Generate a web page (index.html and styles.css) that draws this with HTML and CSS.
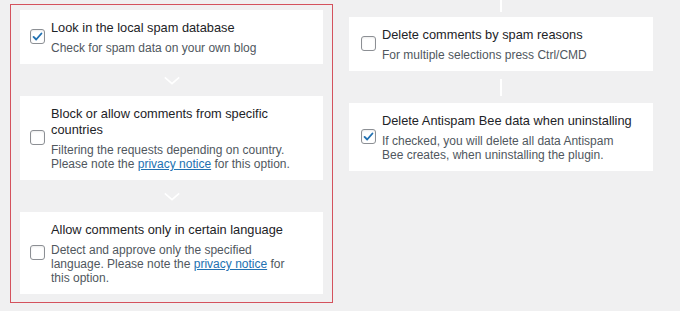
FILE: index.html
```html
<!DOCTYPE html>
<html>
<head>
<meta charset="utf-8">
<link rel="stylesheet" href="styles.css">
</head>
<body>
<div class="page">
  <div class="col-left">
    <div class="card">
      <span class="cb checked"><svg viewBox="0 0 16 16"><path d="M3.8 8.4 L6.6 11.2 L12.2 4.8" /></svg></span>
      <div class="text">
        <div class="title">Look in the local spam database</div>
        <div class="desc">Check for spam data on your own blog</div>
      </div>
    </div>
    <div class="chev"><svg viewBox="0 0 20 10"><path d="M2 1.5 L10 8.5 L18 1.5"/></svg></div>
    <div class="card">
      <span class="cb"></span>
      <div class="text">
        <div class="title">Block or allow comments from specific countries</div>
        <div class="desc">Filtering the requests depending on country. Please note the <a href="#">privacy notice</a> for this option.</div>
      </div>
    </div>
    <div class="chev"><svg viewBox="0 0 20 10"><path d="M2 1.5 L10 8.5 L18 1.5"/></svg></div>
    <div class="card">
      <span class="cb"></span>
      <div class="text">
        <div class="title">Allow comments only in certain language</div>
        <div class="desc">Detect and approve only the specified language. Please note the <a href="#">privacy notice</a> for this option.</div>
      </div>
    </div>
  </div>
  <div class="col-right">
    <div class="line top"></div>
    <div class="card">
      <span class="cb"></span>
      <div class="text">
        <div class="title">Delete comments by spam reasons</div>
        <div class="desc">For multiple selections press Ctrl/CMD</div>
      </div>
    </div>
    <div class="line mid"></div>
    <div class="card">
      <span class="cb checked"><svg viewBox="0 0 16 16"><path d="M3.8 8.4 L6.6 11.2 L12.2 4.8" /></svg></span>
      <div class="text">
        <div class="title">Delete Antispam Bee data when uninstalling</div>
        <div class="desc">If checked, you will delete all data Antispam Bee creates, when uninstalling the plugin.</div>
      </div>
    </div>
  </div>
</div>
</body>
</html>
```
FILE: styles.css
```css
html, body {
  margin: 0;
  padding: 0;
  background: #f0f0f1;
}
body {
  font-family: "Liberation Sans", Arial, sans-serif;
  width: 680px;
  height: 311px;
  overflow: hidden;
}
.page {
  display: flex;
  align-items: flex-start;
  padding: 4px 0 0 10px;
}
.col-left {
  width: 303px;
  border: 1px solid #d4525d;
  padding: 5px 9px 8px 9px;
  display: flex;
  flex-direction: column;
}
.col-right {
  width: 304px;
  margin-left: 16px;
  margin-top: -4px;
  display: flex;
  flex-direction: column;
}
.card {
  background: #fff;
  display: flex;
  align-items: center;
  padding: 10px 18px 9px 10px;
}
.col-right .card {
  padding-left: 12px;
}
.cb {
  flex: none;
  width: 13px;
  height: 13px;
  border: 1px solid #8c8f94;
  border-radius: 3px;
  background: #fff;
  margin-right: 6px;
  margin-top: -2px;
  position: relative;
  box-shadow: inset 0 1px 2px rgba(0,0,0,0.08);
}
.cb svg {
  position: absolute;
  left: -1px;
  top: -1px;
  width: 15px;
  height: 15px;
}
.cb svg path {
  fill: none;
  stroke: #2271b1;
  stroke-width: 2;
  stroke-linecap: round;
  stroke-linejoin: round;
}
.text {
  flex: 1;
  min-width: 0;
}
.title {
  font-size: 12.8px;
  line-height: 16px;
  color: #1d2327;
}
.desc {
  font-size: 12px;
  line-height: 14px;
  color: #50575e;
  margin-top: 5px;
}
.desc a {
  color: #2271b1;
  text-decoration: underline;
}
.chev {
  height: 32px;
  display: flex;
  align-items: center;
  justify-content: center;
}
.chev svg {
  width: 18px;
  height: 9px;
}
.chev path {
  fill: none;
  stroke: #ffffff;
  stroke-width: 1.8;
}
.line {
  width: 2px;
  background: #ffffff;
  align-self: center;
}
.line.top {
  height: 12px;
  margin-bottom: 5px;
}
.line.mid {
  height: 17px;
  margin: 8px 0 7px;
}
```
